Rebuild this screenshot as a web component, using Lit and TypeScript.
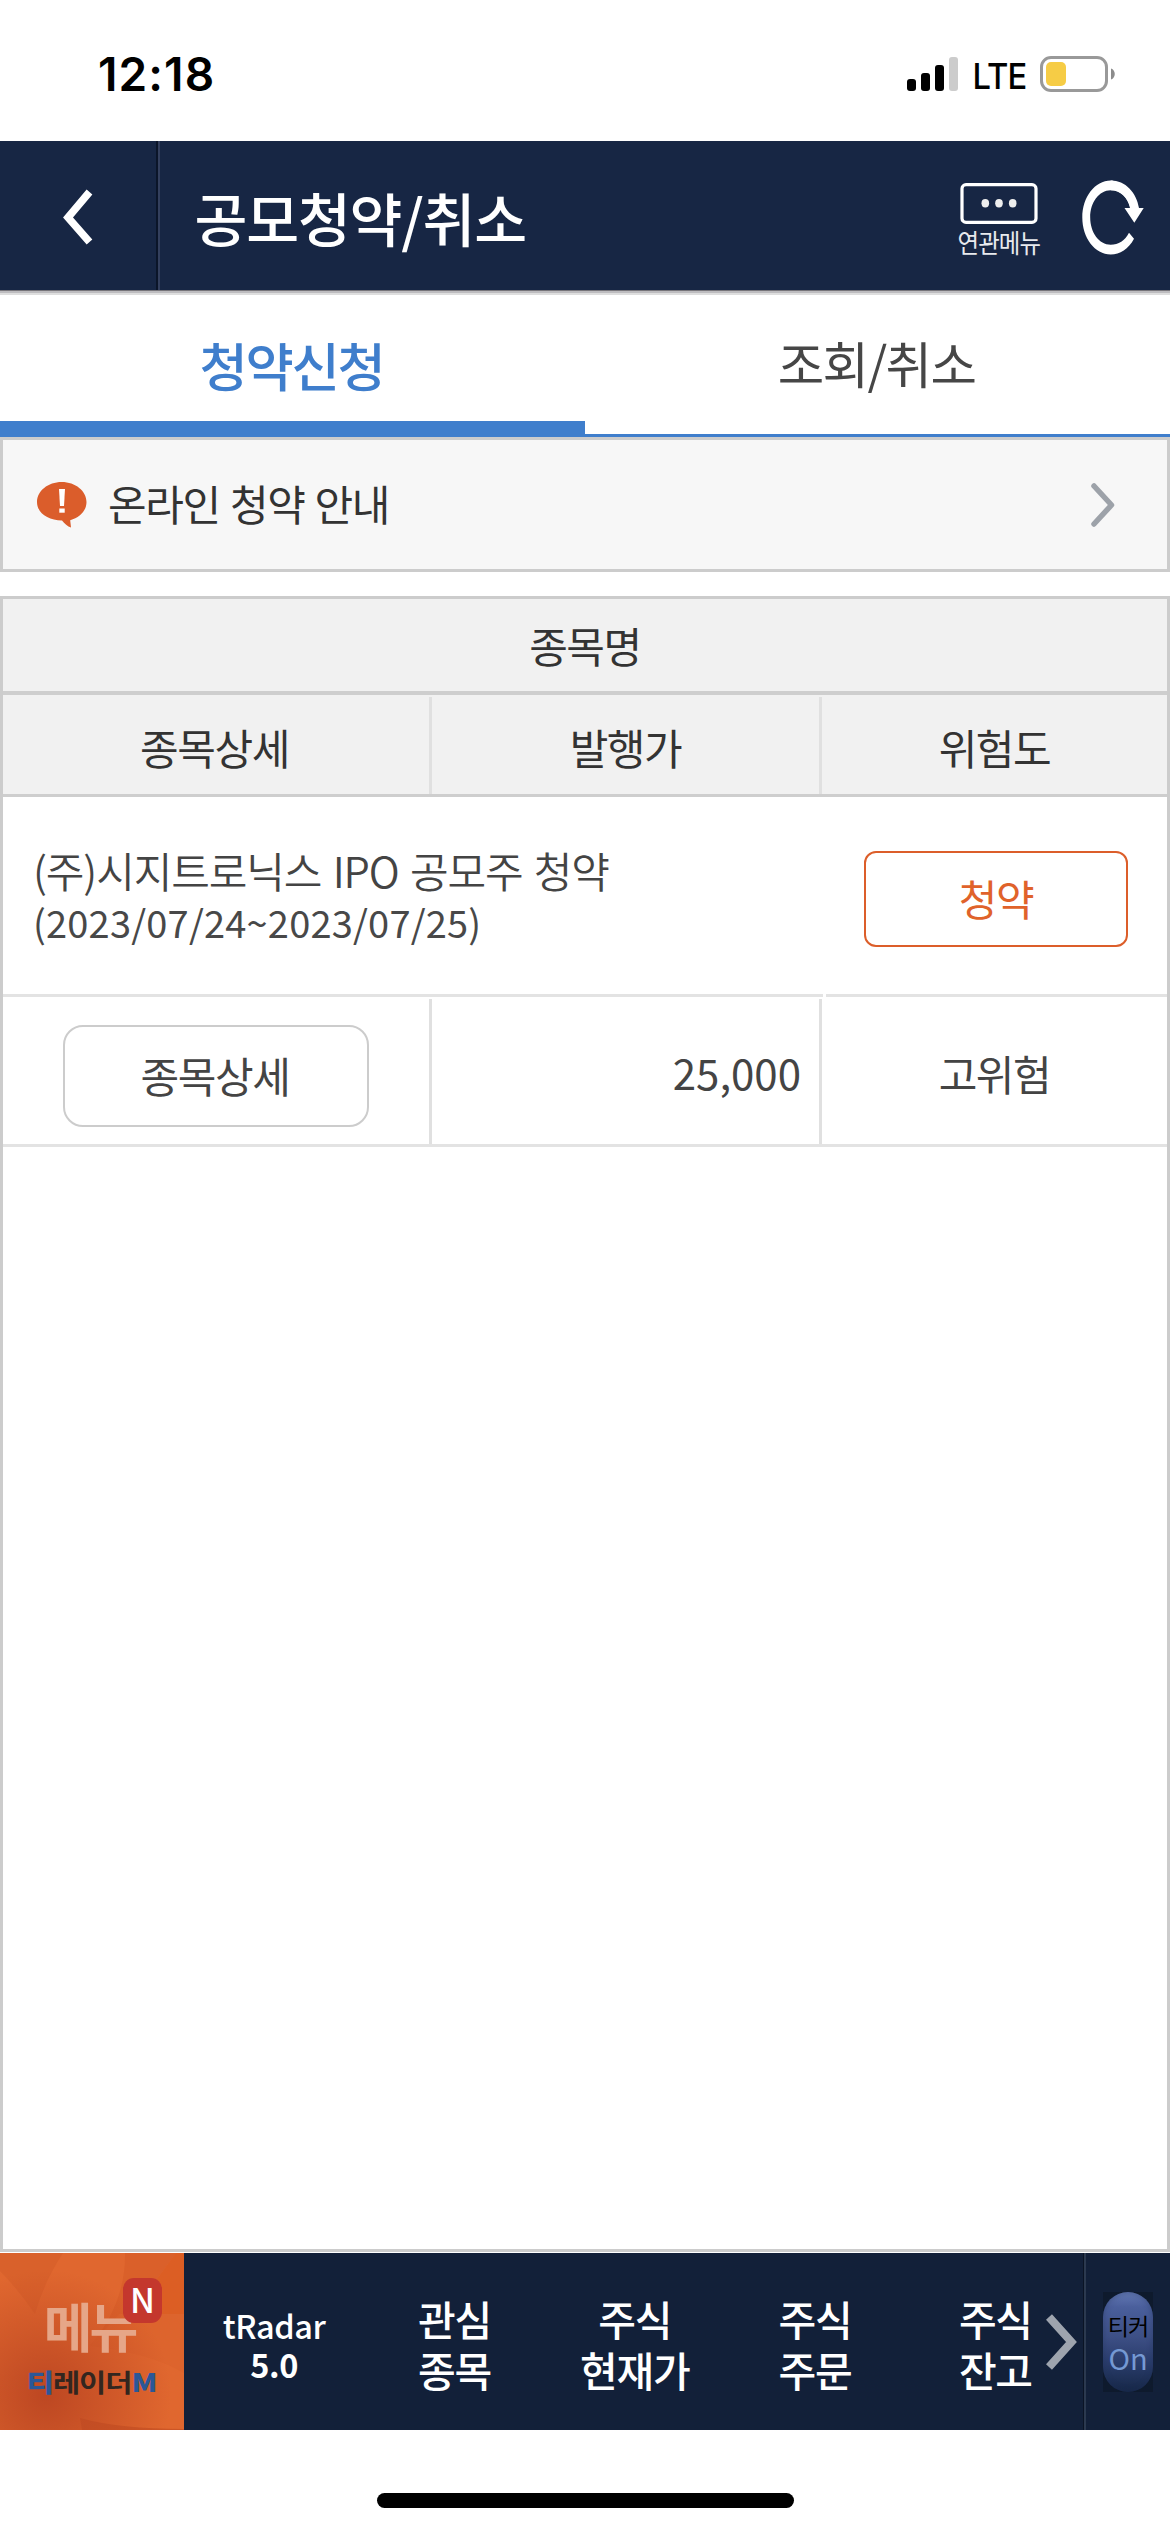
import { LitElement, html, css } from "lit";
import { customElement, property } from "lit/decorators.js";

const fontStack = css`"Noto Sans CJK KR", "Noto Sans", sans-serif`;

@customElement("status-bar")
class StatusBar extends LitElement {
  static styles = css`
    :host {
      display: flex;
      justify-content: space-between;
      align-items: center;
      height: 141px;
      box-sizing: border-box;
      padding: 7px 54px 0 98px;
      color: #000;
      font-family: Inter, "Liberation Sans", sans-serif;
    }
    .time {
      font-size: 46px;
      font-weight: 600;
      letter-spacing: 1.1px;
      line-height: 60px;
    }
    .right {
      display: flex;
      align-items: center;
    }
    .network {
      width: 81px;
      margin-top: 3px;
      font-size: 36px;
      font-weight: 500;
      letter-spacing: -1px;
      line-height: 40px;
      text-align: center;
      transform: scaleX(0.91);
    }
    svg {
      display: block;
    }
  `;
  render() {
    return html`
      <span class="time">12:18</span>
      <div class="right">
        <svg width="52" height="36" viewBox="0 0 52 36">
          <rect x="0" y="23" width="9" height="12" rx="3" />
          <rect x="14" y="17" width="9" height="18" rx="3" />
          <rect x="28" y="9" width="9" height="26" rx="3" />
          <rect x="42" y="1" width="9" height="34" rx="3" fill="#ccc" />
        </svg>
        <span class="network">LTE</span>
        <svg width="76" height="36" viewBox="0 0 76 36">
          <rect x="1.5" y="1.5" width="65" height="33" rx="9.5" fill="none" stroke="#999" stroke-width="3" />
          <rect x="6" y="6" width="20" height="24" rx="5" fill="#f6cc45" />
          <path d="M71 12.5c5 1.5 5 9.5 0 11z" fill="#8c8c8c" />
        </svg>
      </div>
    `;
  }
}

@customElement("title-bar")
class TitleBar extends LitElement {
  static styles = css`
    :host {
      display: flex;
      height: 149px;
      background: #172644;
      color: #fff;
      font-family: ${fontStack};
      box-shadow: 0 1px 0 #77757a, 0 3px 0 #bdbcbf, 0 5px 0 #dedede;
      margin-bottom: 5px;
    }
    .back {
      width: 93px;
      border-right: 2px solid #0b1529;
      padding: 48px 0 0 63px;
    }
    .title {
      flex: 1;
      border-left: 2px solid #333f5d;
      padding: 2px 0 0 34.5px;
      font-size: 57.5px;
      font-weight: 500;
      letter-spacing: -1.2px;
      line-height: 149px;
      white-space: nowrap;
    }
    .related {
      display: flex;
      flex-direction: column;
      align-items: center;
      padding-top: 42px;
      width: 90px;
    }
    .label {
      font-size: 26px;
      line-height: 32px;
      letter-spacing: -1px;
      transform: scaleX(0.9);
      white-space: nowrap;
      margin-top: 2px;
      color: #e8eaee;
    }
    .refresh {
      padding: 38px 24px 0 38px;
    }
    svg {
      display: block;
    }
  `;
  render() {
    return html`
      <div class="back">
        <svg width="30" height="56" viewBox="0 0 30 56">
          <path d="M26.5 3L5 28.5L26.5 53" fill="none" stroke="#fff" stroke-width="7.5" />
        </svg>
      </div>
      <div class="title">공모청약/취소</div>
      <div class="related">
        <svg width="78" height="41" viewBox="0 0 78 41">
          <rect x="2" y="1.6" width="74" height="37.8" rx="4" fill="none" stroke="#fff" stroke-width="3.2" />
          <g fill="#eee">
            <ellipse cx="25.3" cy="20.3" rx="3.8" ry="4.2" />
            <ellipse cx="39" cy="20.3" rx="3.8" ry="4.2" />
            <ellipse cx="52.7" cy="20.3" rx="3.8" ry="4.2" />
          </g>
        </svg>
        <span class="label">연관메뉴</span>
      </div>
      <div class="refresh">
        <svg width="64" height="78" viewBox="0 0 64 78">
          <path
            d="M48.5 29C46 12 37 1.5 28.7 1.5C13 1.5 0.3 18 0.3 38.5C0.3 59 13 75.5 28.7 75.5C38 75.5 46.5 70 52 59.7L47 53.7C43 61.5 36.5 65.7 28.7 65.7C17 65.7 8.2 53.5 8.2 38.5C8.2 23.5 17 11.3 28.7 11.3C39 11.3 46 19 48.5 29z"
            fill="#fff" />
          <path d="M28.7 1.5C43.5 1.5 54.5 13.5 57 29H61.7L52.3 43.7L42.5 29H48C45.5 18 38 11.3 28.7 11.3z" fill="#fff" />
        </svg>
      </div>
    `;
  }
}

@customElement("tab-bar")
class TabBar extends LitElement {
  static styles = css`
    :host {
      display: grid;
      grid-template-columns: 1fr 1fr;
      grid-template-rows: 142px;
      height: 142px;
      font-family: ${fontStack};
      text-align: center;
    }
    .tab {
      box-sizing: border-box;
      border-bottom: 3px solid #3f7ecc;
      line-height: 135px;
      color: #464646;
      font-size: 50.5px;
      letter-spacing: -1.6px;
      padding-right: 2px;
    }
    .tab.active {
      border-bottom-width: 16px;
      line-height: 138px;
      font-size: 52.5px;
      letter-spacing: -2.3px;
      font-weight: 500;
      color: #3f7ecc;
    }
  `;
  render() {
    return html`<div class="tab active">청약신청</div>
      <div class="tab">조회/취소</div>`;
  }
}

@customElement("notice-row")
class NoticeRow extends LitElement {
  static styles = css`
    :host {
      display: flex;
      align-items: center;
      height: 135px;
      box-sizing: border-box;
      border: 3px solid #ccc;
      background: #f7f7f7;
      padding: 0 52px 0 34px;
      font-family: ${fontStack};
    }
    .text {
      flex: 1;
      margin: -4px 0 0 21px;
      font-size: 42px;
      letter-spacing: -1.4px;
      word-spacing: 2.2px;
      line-height: 60px;
      color: #333;
    }
    svg {
      display: block;
    }
  `;
  render() {
    return html`
      <svg width="50" height="46" viewBox="0 0 50 46">
        <path
          d="M24.7 0C38.4 0 49.5 9 49.5 20C49.5 28.5 43 35.5 33.2 38.2L34 45.5C30.5 44.5 27.5 41.5 25 38.5C11.2 38.5 0 31 0 20C0 9 11 0 24.7 0z"
          fill="#db5d2b" />
        <path d="M22 7h6l-1 17h-4z" fill="#fff" />
        <rect x="22.3" y="26.5" width="5.4" height="4.2" fill="#fff" />
      </svg>
      <span class="text">온라인 청약 안내</span>
      <svg width="24" height="44" viewBox="0 0 24 44">
        <path d="M3 3L20.5 22L3 41" fill="none" stroke="#9da2a9" stroke-width="5.5" stroke-linecap="round" stroke-linejoin="round" />
      </svg>
    `;
  }
}

@customElement("offer-table")
class OfferTable extends LitElement {
  static styles = css`
    :host {
      display: block;
      height: 1656px;
      margin: 24px 0 1px;
      box-sizing: border-box;
      border: 3px solid #ccc;
      font-family: ${fontStack};
      font-size: 42px;
      letter-spacing: -1.4px;
      color: #444;
    }
    .head {
      background: #f1f1f1;
      color: #333;
    }
    .name {
      height: 92px;
      line-height: 91px;
      border-bottom: 4px solid #cecece;
      text-align: center;
    }
    .cols {
      display: grid;
      grid-template-columns: 429px 390px 1fr;
      grid-template-rows: 147px;
      border-bottom: 3px solid #e3e3e3;
      text-align: center;
      line-height: 147px;
    }
    .head .cols {
      grid-template-rows: 99px;
      border-color: #cecece;
      line-height: 99px;
    }
    .cell {
      border-right: 3px solid #e0e0e0;
      margin-top: 2px;
    }
    .cell:last-child {
      border: 0;
    }
    .first {
      padding-right: 3px;
    }
    .offer {
      display: flex;
      justify-content: space-between;
      align-items: flex-start;
      height: 200px;
      background: linear-gradient(90deg, #e3e3e3 820px, #fff 820px 823px, #e3e3e3 823px) bottom / 100% 3px no-repeat;
      padding: 0 39px 0 30px;
    }
    .company {
      margin-top: 43px;
      font-weight: 350;
      letter-spacing: -1.1px;
      word-spacing: 3px;
      line-height: 60px;
      white-space: nowrap;
    }
    .period {
      font-size: 38px;
      letter-spacing: 0.2px;
      line-height: 43px;
      color: #484848;
    }
    .apply {
      box-sizing: border-box;
      width: 264px;
      height: 96px;
      margin-top: 54px;
      border: 2.5px solid #dc5e2a;
      border-radius: 12px;
      color: #e0622a;
      text-align: center;
      line-height: 90px;
    }
    .detail {
      box-sizing: border-box;
      width: 306px;
      height: 102px;
      margin: 26px 0 0 60px;
      border: 2px solid #ccc;
      border-radius: 20px;
      line-height: 96px;
      padding-right: 2px;
    }
    .price {
      text-align: right;
      padding-right: 18px;
      letter-spacing: 0;
      line-height: 145px;
    }
  `;
  render() {
    return html`
      <div class="head">
        <div class="name">종목명</div>
        <div class="cols">
          <div class="cell first">종목상세</div>
          <div class="cell">발행가</div>
          <div class="cell">위험도</div>
        </div>
      </div>
      <div class="offer">
        <div>
          <div class="company">(주)시지트로닉스 IPO 공모주 청약</div>
          <div class="period">(2023/07/24~2023/07/25)</div>
        </div>
        <div class="apply">청약</div>
      </div>
      <div class="cols">
        <div class="cell"><div class="detail">종목상세</div></div>
        <div class="cell price">25,000</div>
        <div class="cell">고위험</div>
      </div>
    `;
  }
}

@customElement("nav-item")
class NavItem extends LitElement {
  @property() top = "";
  @property() bottom = "";
  @property({ type: Boolean, reflect: true }) latin = false;
  static styles = css`
    :host {
      display: flex;
      flex-direction: column;
      align-items: center;
      justify-content: center;
      box-sizing: border-box;
      width: 180.3px;
      padding-top: 5px;
      font-size: 41px;
      font-weight: 500;
      letter-spacing: -1.3px;
      line-height: 51px;
      color: #fff;
      white-space: nowrap;
    }
    :host([latin]) {
      padding-top: 4px;
      font-size: 32.5px;
      line-height: 39px;
      letter-spacing: -0.4px;
    }
    :host([latin]) .bottom {
      font-size: 32.5px;
      font-weight: 700;
      letter-spacing: -0.4px;
    }
  `;
  render() {
    return html`<span>${this.top}</span><span class="bottom">${this.bottom}</span>`;
  }
}

@customElement("bottom-nav")
class BottomNav extends LitElement {
  static styles = css`
    :host {
      display: flex;
      height: 177px;
      background: #122039;
      font-family: ${fontStack};
    }
    .menu {
      position: relative;
      width: 184px;
      overflow: hidden;
    }
    .art {
      position: absolute;
      inset: 0;
    }
    .menu-content {
      position: relative;
      display: flex;
      flex-direction: column;
      align-items: center;
      padding-top: 40px;
    }
    .menu-label {
      margin-right: 5px;
      font-size: 53px;
      line-height: 64px;
      font-weight: 700;
      letter-spacing: -3px;
      color: #e6a688;
    }
    .brand {
      margin-top: 5px;
      font-size: 29px;
      line-height: 38px;
      font-weight: 700;
      letter-spacing: -1px;
      color: #33261f;
      white-space: nowrap;
      transform: scale(1.02, 0.87);
    }
    .brand b {
      color: #2b5797;
    }
    .badge {
      position: absolute;
      left: 123px;
      top: 25px;
      width: 39px;
      height: 45px;
      border-radius: 11px;
      background: #c4372d;
      color: #fff;
      font-size: 34px;
      font-weight: 500;
      line-height: 42px;
      text-align: center;
    }
    .items {
      display: flex;
      width: 862px;
      overflow: hidden;
    }
    nav-item {
      flex: none;
    }
    .more {
      width: 37px;
      padding-top: 61px;
    }
    .ticker {
      flex: 1;
      border-left: 1px solid #0a1425;
      box-shadow: inset 2px 0 0 #2b394f;
      padding: 39px 0 0 19px;
    }
    .plate {
      width: 50px;
      height: 100px;
      background: #0e1a2d;
    }
    .pill {
      height: 100px;
      box-sizing: border-box;
      padding-top: 18px;
      border-radius: 25px;
      background: linear-gradient(#6379b4, #4a5f9c 15%, #3d4f85 45%, #2a3d6c 70%, #162747);
      box-shadow: inset 0 0 6px #1d2d5570;
      text-align: center;
    }
    .state-label {
      font-size: 23px;
      letter-spacing: -1px;
      line-height: 31px;
      color: #000;
    }
    .state {
      font-size: 29px;
      line-height: 32px;
      color: #7599d3;
    }
    svg {
      display: block;
    }
  `;
  render() {
    const items = [
      ["관심", "종목"],
      ["주식", "현재가"],
      ["주식", "주문"],
      ["주식", "잔고"],
    ];
    return html`
      <div class="menu">
        <svg class="art" width="184" height="177" viewBox="0 0 184 177">
          <defs>
            <radialGradient id="shade" gradientUnits="userSpaceOnUse" cx="46" cy="142" r="125">
              <stop offset="0" stop-color="#bd4722" />
              <stop offset="1" stop-color="#bd4722" stop-opacity="0" />
            </radialGradient>
          </defs>
          <rect width="184" height="177" fill="#e0672f" />
          <path d="M0 0H63Q44 29 35 61Q18 36 0 18z" fill="#d9612b" />
          <path d="M125 0H176Q140 50 119 68Q104 75 90 93Q126 50 125 0z" fill="#da602a" />
          <path d="M176 0H184V61H130Q150 36 176 0z" fill="#dc5e24" />
          <path d="M90 93Q150 100 184 120V61H119z" fill="#dd642d" />
          <path d="M80 165Q120 176 184 176V177H82z" fill="#cc5626" />
          <rect width="184" height="177" fill="url(#shade)" />
        </svg>
        <div class="menu-content">
          <span class="menu-label">메뉴</span>
          <span class="brand"><b>티</b>레이더<b>M</b></span>
        </div>
        <span class="badge">N</span>
      </div>
      <div class="items">
        <nav-item latin top="tRadar" bottom="5.0"></nav-item>
        ${items.map(([t, b]) => html`<nav-item top=${t} bottom=${b}></nav-item>`)}
      </div>
      <div class="more">
        <svg width="32" height="56" viewBox="0 0 32 56">
          <path d="M3 3L25.5 28L3 53" fill="none" stroke="#9ea4ae" stroke-width="8" />
        </svg>
      </div>
      <div class="ticker">
        <div class="plate">
          <div class="pill">
            <div class="state-label">티커</div>
            <div class="state">On</div>
          </div>
        </div>
      </div>
    `;
  }
}

@customElement("app-root")
class AppRoot extends LitElement {
  static styles = css`
    :host {
      display: flex;
      flex-direction: column;
      width: 1170px;
      height: 2532px;
      background: #fff;
      overflow: hidden;
    }
    status-bar,
    title-bar,
    tab-bar,
    notice-row,
    offer-table,
    bottom-nav {
      flex: none;
    }
    .home {
      flex: none;
      width: 417px;
      height: 15px;
      margin: 63px auto 0;
      border-radius: 8px;
      background: #000;
    }
  `;
  render() {
    return html`
      <status-bar></status-bar>
      <title-bar></title-bar>
      <tab-bar></tab-bar>
      <notice-row></notice-row>
      <offer-table></offer-table>
      <bottom-nav></bottom-nav>
      <div class="home"></div>
    `;
  }
}
